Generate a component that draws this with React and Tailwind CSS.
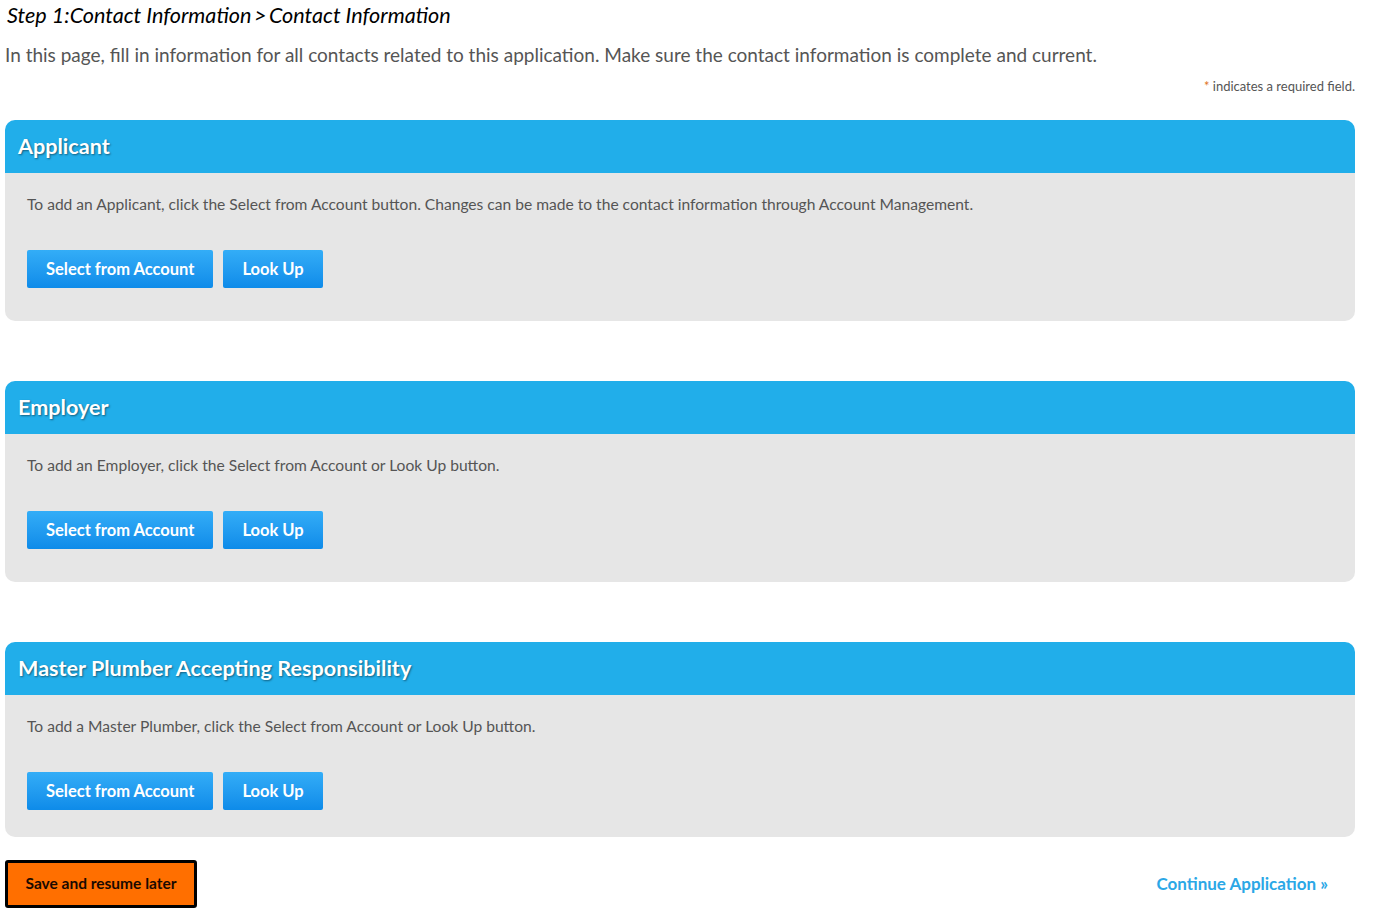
const sections = [
  {
    title: "Applicant",
    text: "To add an Applicant, click the Select from Account button. Changes can be made to the contact information through Account Management.",
    pb: "pb-[33px]",
  },
  {
    title: "Employer",
    text: "To add an Employer, click the Select from Account or Look Up button.",
    pb: "pb-[33px]",
  },
  {
    title: "Master Plumber Accepting Responsibility",
    text: "To add a Master Plumber, click the Select from Account or Look Up button.",
    pb: "pb-[27px]",
  },
];

function ContactPanel({ title, text, pb }) {
  return (
    <div className="rounded-[10px] overflow-hidden">
      <div className="h-[53px] bg-[#21aeea] flex items-center px-[13px]">
        <h2 className="text-white font-bold text-[21.6px] [text-shadow:1px_1px_2px_rgba(0,0,0,0.45)]">
          {title}
        </h2>
      </div>
      <div className={`bg-[#e6e6e6] pt-[21px] px-[22px] ${pb}`}>
        <p className="text-[15.6px] text-[#555] leading-[20px]">{text}</p>
        <div className="flex gap-[10px] mt-[36px]">
          <button className="h-[38px] px-[19px] rounded-[2px] bg-gradient-to-b from-[#33adf7] to-[#0d8be9] text-white font-bold text-[16.5px]">
            Select from Account
          </button>
          <button className="h-[38px] px-[19px] rounded-[2px] bg-gradient-to-b from-[#33adf7] to-[#0d8be9] text-white font-bold text-[16.5px]">
            Look Up
          </button>
        </div>
      </div>
    </div>
  );
}

export default function App() {
  return (
    <div className="bg-white min-h-[918px] px-[5px] pt-[2px] font-['Lato',sans-serif] w-[1360px]">
      <h1 className="italic text-[21.6px] text-black pl-[2px] leading-[26px]">
        Step 1:Contact Information&thinsp;&gt;&thinsp;Contact Information
      </h1>
      <p className="text-[19px] text-[#555] mt-[14px] leading-[26px]">
        In this page, fill in information for all contacts related to this application. Make sure the contact information is complete and current.
      </p>
      <p className="text-right text-[13px] text-[#555] mt-[10px] leading-[16px]">
        <span className="text-[#e0721e]">*</span> indicates a required field.
      </p>
      <div className="mt-[26px] flex flex-col gap-[60px]">
        {sections.map((s) => (
          <ContactPanel key={s.title} {...s} />
        ))}
      </div>
      <div className="flex items-center justify-between mt-[23px] pr-[27px]">
        <button className="h-[48px] w-[192px] bg-[#ff6f00] border-[3px] border-black rounded-[3px] text-[15.5px] font-bold text-[#1a0a00]">
          Save and resume later
        </button>
        <a href="#" className="text-[#2ba7e6] text-[17px] font-bold">
          Continue Application »
        </a>
      </div>
    </div>
  );
}
